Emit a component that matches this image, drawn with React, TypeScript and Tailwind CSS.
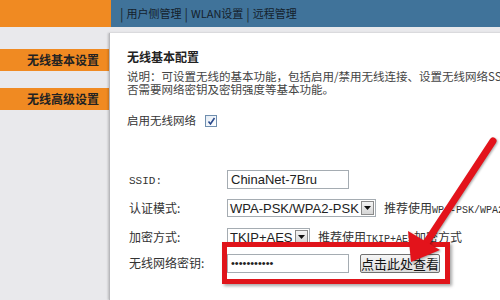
import React from 'react';

const cjk = "font-['Noto_Sans_CJK_SC',sans-serif]";
const mono = "font-['Liberation_Mono','Noto_Sans_CJK_SC',monospace]";
const arial = "font-['Liberation_Sans',Arial,sans-serif]";

function DropButton() {
  return (
    <span className="flex h-[14px] w-[13px] items-center justify-center border border-[#8a8a8a] bg-gradient-to-b from-[#f4f4f4] to-[#d6d6d6]">
      <svg width="7" height="4" viewBox="0 0 7 4">
        <path d="M0 0h7L3.5 4z" fill="#111" />
      </svg>
    </span>
  );
}

function Select({ value, width }: { value: string; width: string }) {
  return (
    <div className={`flex h-[18px] ${width} items-center justify-between border border-[#a5acb2] bg-white pl-[2px] pr-[1px]`}>
      <span className={`${arial} text-[13px] leading-none text-[#222]`}>{value}</span>
      <DropButton />
    </div>
  );
}

function Row({ label, children, className = '' }: { label: React.ReactNode; children: React.ReactNode; className?: string }) {
  return (
    <div className={`flex items-center ${className}`}>
      <div className={`w-[100px] shrink-0 pl-[2px] text-[12px] text-[#333] ${cjk}`}>{label}</div>
      {children}
    </div>
  );
}

export default function App() {
  return (
    <div className={`relative h-[300px] w-[500px] overflow-hidden bg-[#e9e9ec] ${cjk}`}>
      {/* top bar */}
      <div className="flex h-[27px]">
        <div className="w-[111px] bg-[#f08a22]" />
        <div className="flex flex-1 items-center bg-[#40739a] pl-[9px] text-[11px] text-[#14212c]">
          <span className="mr-[3px] text-[13px] text-[#1a2630]">|</span>
          <span>用户侧管理</span>
          <span className="mx-[3px] text-[13px] text-[#1a2630]">|</span>
          <span>WLAN设置</span>
          <span className="mx-[3px] text-[13px] text-[#1a2630]">|</span>
          <span>远程管理</span>
        </div>
      </div>

      <div className="flex h-[273px]">
        {/* sidebar */}
        <div className="flex w-[109px] shrink-0 flex-col gap-[17px] pt-[22px]">
          <div className="flex h-[22px] items-center justify-end bg-[#f08a22] pr-[10px] text-[12px] font-bold text-[#222]">
            无线基本设置
          </div>
          <div className="flex h-[22px] items-center justify-end bg-[#f08a22] pr-[10px] text-[12px] font-bold text-[#222]">
            无线高级设置
          </div>
        </div>

        {/* content */}
        <div className="mt-[6px] flex-1 border-l border-[#b8b8bc] bg-white pl-[17px] shadow-[-1px_0_2px_rgba(0,0,0,0.2)]">
          <div className="mt-[17px] text-[12px] font-bold leading-[14px] text-[#222]">无线基本配置</div>
          <div className="mt-[6px] whitespace-nowrap text-[11.5px] leading-[13px] text-[#444]">
            <div>说明：可设置无线的基本功能，包括启用/禁用无线连接、设置无线网络SSID、是</div>
            <div>否需要网络密钥及密钥强度等基本功能。</div>
          </div>
          <div className="mt-[18px] flex h-[14px] items-center text-[11.5px] text-[#333]">
            <span>启用无线网络</span>
            <span className="ml-[9px] flex h-[12px] w-[12px] items-center justify-center border border-[#6f8eae] bg-gradient-to-br from-[#e4ecf5] to-white">
              <svg width="9" height="9" viewBox="0 0 9 9">
                <path d="M1.5 4.5l2 2.5 4-6" stroke="#2b4a8c" strokeWidth="1.6" fill="none" />
              </svg>
            </span>
          </div>

          <div className="mt-[42px] flex flex-col">
            <Row label={<span className={`${mono} text-[11px]`}>SSID:</span>}>
              <div className="flex h-[19px] w-[122px] items-center border border-[#a5acb2] bg-white pl-[3px]">
                <span className={`${arial} text-[13px] leading-none text-[#222]`}>ChinaNet-7Bru</span>
              </div>
            </Row>
            <Row label="认证模式:" className="mt-[9px]">
              <Select value="WPA-PSK/WPA2-PSK" width="w-[149px]" />
              <span className="ml-[8px] whitespace-nowrap text-[12px] text-[#333]">
                推荐使用<span className={`${mono} text-[10px]`}>WPA-PSK/WPA2-PSK</span>
              </span>
            </Row>
            <Row label="加密方式:" className="mt-[10px]">
              <Select value="TKIP+AES" width="w-[83px]" />
              <span className="ml-[8px] whitespace-nowrap text-[12px] text-[#333]">
                推荐使用<span className={`${mono} text-[10px]`}>TKIP+AES</span>加密方式
              </span>
            </Row>
            <Row label="无线网络密钥:" className="mt-[7px]">
              <div className="flex h-[19px] w-[122px] items-center border border-[#a5acb2] bg-white pl-[3px]">
                <span className={`${arial} text-[11px] leading-none text-[#222]`}>•••••••••••</span>
              </div>
              <button className="ml-[11px] h-[19px] w-[80px] rounded-[2px] border border-[#707070] bg-gradient-to-b from-[#f6f6f6] to-[#dcdcdc] text-[13px] leading-none text-[#111]">
                点击此处查看
              </button>
            </Row>
          </div>
        </div>
      </div>

      {/* annotation: red frame */}
      <div className="absolute left-[222px] top-[242px] h-[42px] w-[228px] border-[5px] border-[#e0141a] shadow-[2px_2px_3px_rgba(0,0,0,0.35)]" />

      {/* annotation: arrow */}
      <svg className="absolute left-0 top-0" width="500" height="300" viewBox="0 0 500 300">
        <g style={{ filter: 'drop-shadow(1px 1px 1px rgba(0,0,0,0.35))' }}>
          <line x1="493" y1="141" x2="426" y2="243" stroke="#e3131b" strokeWidth="7" strokeLinecap="round" />
          <polygon points="411,262 408,231 440,250" fill="#e3131b" />
        </g>
      </svg>
    </div>
  );
}
